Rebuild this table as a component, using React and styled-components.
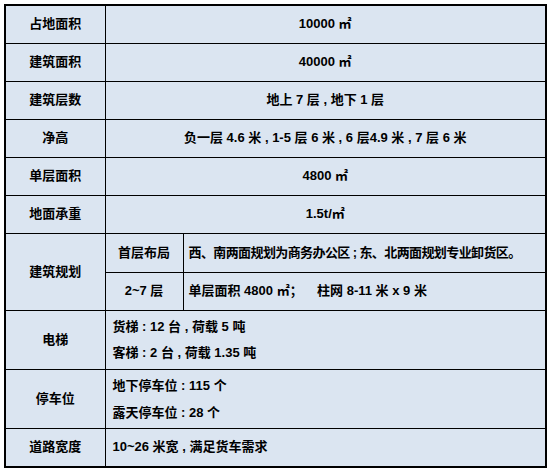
import React from 'react'
import styled, {createGlobalStyle} from 'styled-components'

const Global = createGlobalStyle`
    html, body {
        margin: 0;
        padding: 0;
        background: #ffffff;
    }
    body {
        font-family: "Liberation Sans", "Noto Sans CJK SC", sans-serif;
        font-size: 13px;
        font-weight: bold;
        color: #000;
    }
`

const Page = styled.div`
    padding: 4px 0 0 4px;
`

const Table = styled.table`
    border-collapse: collapse;
    width: 543px;
    table-layout: fixed;
    background: #dbe5f1;
    border: 2px solid #000;
`

const Row = styled.tr`
    height: ${p => p.h}px;
`

const Cell = styled.td`
    border: 1px solid #000;
    padding: ${p => (p.left ? '0 0 0 7px' : '0')};
    text-align: ${p => (p.left ? 'left' : 'center')};
    vertical-align: middle;
    white-space: pre;
    line-height: 16px;
`

// cells of the two 建筑规划 sub rows
const SubValue = styled(Cell)`
    padding-left: 5px;
    letter-spacing: ${p => (p.tight ? '-0.6px' : '0')};
`

const Line = styled.div`
    line-height: ${p => p.lh}px;
`

const rows = [
    ['占地面积', '10000 ㎡'],
    ['建筑面积', '40000 ㎡'],
    ['建筑层数', '地上 7 层 , 地下 1 层'],
    ['净高', '负一层 4.6 米 , 1-5 层 6 米 , 6 层4.9 米 , 7 层 6 米'],
    ['单层面积', '4800 ㎡'],
    ['地面承重', '1.5t/㎡'],
]

export default function App() {
    return (
        <Page>
            <Global />
            <Table>
                <colgroup>
                    <col style={{width: 100}} />
                    <col style={{width: 78}} />
                    <col />
                </colgroup>
                <tbody>
                    {rows.map(([label, value]) => (
                        <Row h={38} key={label}>
                            <Cell>{label}</Cell>
                            <Cell colSpan={2}>{value}</Cell>
                        </Row>
                    ))}
                    <Row h={39}>
                        <Cell rowSpan={2}>建筑规划</Cell>
                        <Cell>首层布局</Cell>
                        <SubValue left tight>西、南两面规划为商务办公区 ; 东、北两面规划专业卸货区。</SubValue>
                    </Row>
                    <Row h={38}>
                        <Cell>2~7 层</Cell>
                        <SubValue left>单层面积 4800 ㎡；    柱网 8-11 米 x 9 米</SubValue>
                    </Row>
                    <Row h={59}>
                        <Cell>电梯</Cell>
                        <Cell colSpan={2} left>
                            <Line lh={26}>货梯 : 12 台 , 荷载 5 吨</Line>
                            <Line lh={26}>客梯 : 2 台 , 荷载 1.35 吨</Line>
                        </Cell>
                    </Row>
                    <Row h={59}>
                        <Cell>停车位</Cell>
                        <Cell colSpan={2} left>
                            <Line lh={27}>地下停车位 : 115 个</Line>
                            <Line lh={27}>露天停车位 : 28 个</Line>
                        </Cell>
                    </Row>
                    <Row h={39}>
                        <Cell>道路宽度</Cell>
                        <Cell colSpan={2} left>10~26 米宽 , 满足货车需求</Cell>
                    </Row>
                </tbody>
            </Table>
        </Page>
    )
}
